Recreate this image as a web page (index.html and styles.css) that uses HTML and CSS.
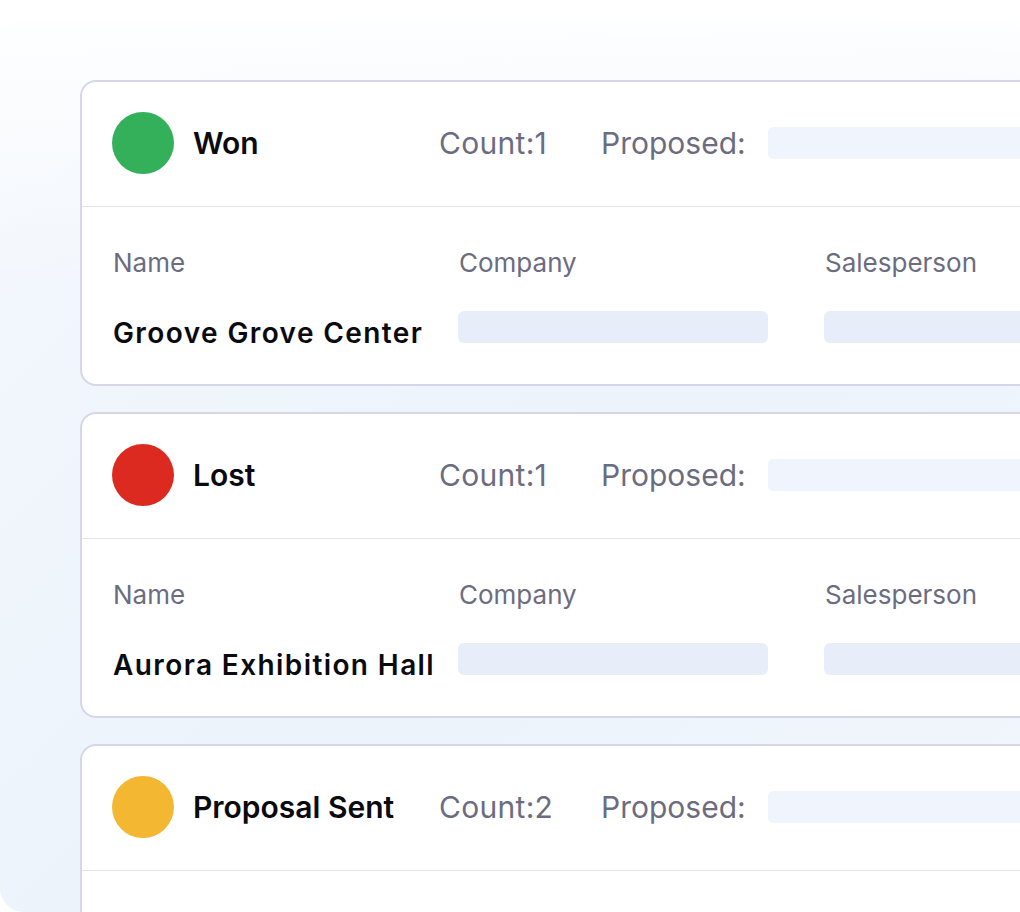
FILE: index.html
```html
<!DOCTYPE html>
<html>
<head>
<meta charset="utf-8">
<link rel="stylesheet" href="styles.css">
</head>
<body>
<div class="panel">
  <div class="card">
    <div class="head">
      <span class="dot green"></span>
      <span class="title">Won</span>
      <span class="count">Count:1</span>
      <span class="prop">Proposed:</span>
      <span class="hbar"></span>
    </div>
    <div class="body">
      <div class="grid">
        <span class="lbl">Name</span>
        <span class="lbl">Company</span>
        <span class="lbl">Salesperson</span>
        <span class="name">Groove Grove Center</span>
        <span class="bbar"></span>
        <span class="bbar"></span>
      </div>
    </div>
  </div>
  <div class="card">
    <div class="head">
      <span class="dot red"></span>
      <span class="title">Lost</span>
      <span class="count">Count:1</span>
      <span class="prop">Proposed:</span>
      <span class="hbar"></span>
    </div>
    <div class="body">
      <div class="grid">
        <span class="lbl">Name</span>
        <span class="lbl">Company</span>
        <span class="lbl">Salesperson</span>
        <span class="name">Aurora Exhibition Hall</span>
        <span class="bbar"></span>
        <span class="bbar"></span>
      </div>
    </div>
  </div>
  <div class="card">
    <div class="head">
      <span class="dot yellow"></span>
      <span class="title">Proposal Sent</span>
      <span class="count">Count:2</span>
      <span class="prop">Proposed:</span>
      <span class="hbar"></span>
    </div>
  </div>
</div>
</body>
</html>
```

FILE: styles.css
```css
html, body {
  margin: 0;
  padding: 0;
  background: #ffffff;
  overflow: hidden;
  height: 912px;
}
body {
  font-family: Inter, "Noto Sans", sans-serif;
}
.panel {
  margin-top: 20px;
  height: 892px;
  width: 1200px;
  box-sizing: border-box;
  padding: 60px 0 0 80px;
  border-radius: 24px;
  background:
    linear-gradient(180deg, rgba(255,255,255,0.9) 0%, rgba(255,255,255,0) 30%),
    linear-gradient(135deg, #f4f8fd 0%, #ecf3fb 50%, #f3f7fc 100%);
  display: flex;
  flex-direction: column;
  gap: 26px;
}
.card {
  width: 1100px;
  flex: none;
  background: #ffffff;
  border: 2px solid #d6d6e8;
  border-radius: 16px;
  overflow: hidden;
}
.card:last-child {
  height: 200px;
}
.head {
  display: flex;
  align-items: center;
  padding: 30px 0 32px 30px;
  border-bottom: 1.5px solid #e4e4ee;
}
.dot {
  width: 62px;
  height: 62px;
  border-radius: 50%;
  flex: none;
}
.green { background: #34b05a; }
.red { background: #dc2a20; }
.yellow { background: #f4b731; }
.title {
  margin-left: 19px;
  width: 246px;
  flex: none;
  font-size: 30px;
  font-weight: 600;
  color: #0a0a0f;
}
.count {
  width: 162px;
  flex: none;
  font-size: 30px;
  letter-spacing: 0.3px;
  color: #6c6c80;
}
.prop {
  width: 167px;
  flex: none;
  font-size: 30px;
  color: #6c6c80;
}
.hbar {
  width: 400px;
  height: 32px;
  border-radius: 5px;
  background: #f0f5fd;
}
.body {
  padding: 40px 0 31px 31px;
}
.grid {
  display: grid;
  grid-template-columns: 345px 366px 300px;
  row-gap: 32px;
  align-items: start;
}
.lbl {
  font-size: 26px;
  line-height: 32px;
  color: #6c6c80;
}
.grid .lbl:nth-child(2), .grid .lbl:nth-child(3) {
  padding-left: 1px;
}
.name {
  font-size: 28px;
  line-height: 40px;
  margin-top: 2px;
  font-weight: 600;
  letter-spacing: 1.4px;
  color: #0a0a0f;
}
.bbar {
  height: 32px;
  width: 310px;
  border-radius: 6px;
  background: #e8eef9;
}
.bbar:last-child {
  width: 400px;
}
```
